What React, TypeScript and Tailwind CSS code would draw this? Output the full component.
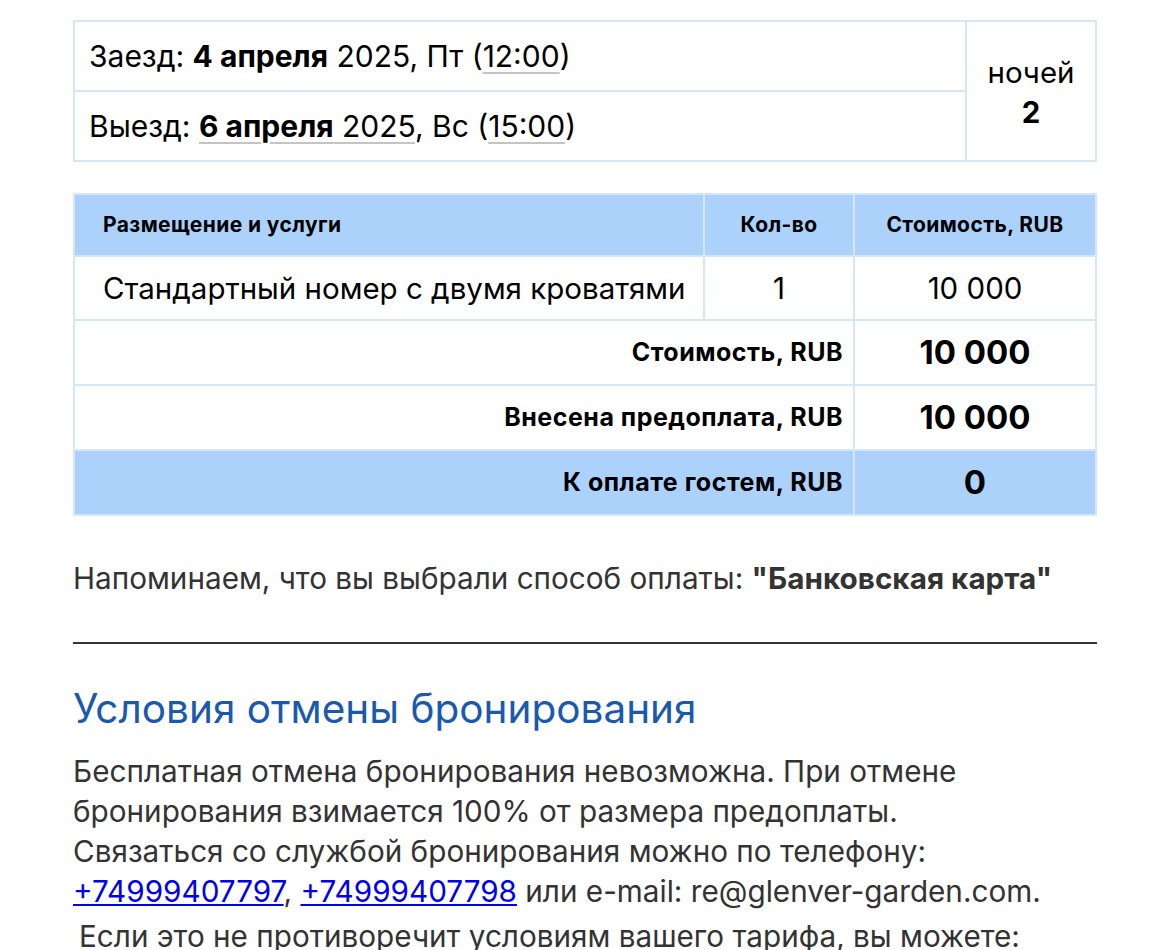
import React from "react";

const B = "border-2 border-[#d3e6fc]";
const U = "underline decoration-[#c4c4c4] decoration-[1.5px] underline-offset-[5px]";

export default function App() {
  return (
    <div className="min-h-[950px] bg-white text-black" style={{ fontFamily: "Inter, 'Noto Sans', sans-serif" }}>
      <div className="mx-auto w-[1024px] pt-[20px]">
        <table className="w-full border-collapse">
          <tbody>
            <tr className="h-[70px]">
              <td className={`${B} pl-[14px] text-[30px]`}>
                Заезд: <b className="font-bold">4 апреля</b> 2025, Пт (<span className={U}>12:00</span>)
              </td>
              <td rowSpan={2} className={`${B} w-[130px] pt-[2px] text-center text-[29.5px] leading-[40px]`}>
                <div>ночей</div>
                <div className="font-bold">2</div>
              </td>
            </tr>
            <tr className="h-[70px]">
              <td className={`${B} pl-[14px] text-[30px]`}>
                Выезд:{" "}
                <span className={U}>
                  <b className="font-bold">6 апреля</b> 2025
                </span>
                , Вс (<span className={U}>15:00</span>)
              </td>
            </tr>
          </tbody>
        </table>

        <table className="mt-[31px] w-full border-collapse">
          <tbody>
            <tr className="h-[62px] bg-[#acd1fb] text-[21px] font-bold tracking-[0.4px]">
              <td className={`${B} w-[630px] pl-[28px]`}>Размещение и услуги</td>
              <td className={`${B} w-[150px] text-center`}>Кол-во</td>
              <td className={`${B} text-center`}>Стоимость, RUB</td>
            </tr>
            <tr className="h-[64px] text-[29.5px]">
              <td className={`${B} pl-[28px]`}>Стандартный номер с двумя кроватями</td>
              <td className={`${B} text-center`}>1</td>
              <td className={`${B} text-center`}>10 000</td>
            </tr>
            <tr className="h-[65px]">
              <td colSpan={2} className={`${B} pr-[10px] text-right text-[25px] font-bold tracking-[0.5px]`}>Стоимость, RUB</td>
              <td className={`${B} text-center text-[33px] font-bold`}>10 000</td>
            </tr>
            <tr className="h-[65px]">
              <td colSpan={2} className={`${B} pr-[10px] text-right text-[25px] font-bold tracking-[0.5px]`}>Внесена предоплата, RUB</td>
              <td className={`${B} text-center text-[33px] font-bold`}>10 000</td>
            </tr>
            <tr className="h-[65px] bg-[#acd1fb]">
              <td colSpan={2} className={`${B} pr-[10px] text-right text-[25px] font-bold tracking-[0.5px]`}>К оплате гостем, RUB</td>
              <td className={`${B} text-center text-[33px] font-bold`}>0</td>
            </tr>
          </tbody>
        </table>

        <p className="mt-[42px] text-[29.7px] leading-[40px] text-[#333]">
          Напоминаем, что вы выбрали способ оплаты: <b className="font-bold">"Банковская карта"</b>
        </p>

        <div className="mt-[44px] h-[2px] bg-[#333]" />

        <h2 className="mt-[41px] text-[40.5px] leading-[48px] text-[#1a59ae]">Условия отмены бронирования</h2>

        <p className="mt-[18px] text-[29.7px] leading-[40px] text-[#333]">
          Бесплатная отмена бронирования невозможна. При отмене
          <br />
          бронирования взимается 100% от размера предоплаты.
          <br />
          Связаться со службой бронирования можно по телефону:
          <br />
          <a href="#" className="text-[#0000ee] underline">+74999407797</a>,{" "}
          <a href="#" className="text-[#0000ee] underline">+74999407798</a> или e-mail: re@glenver-garden.com.
        </p>
        <p className="mt-[5px] pl-[6px] text-[29.7px] leading-[40px] text-[#333]">
          Если это не противоречит условиям вашего тарифа, вы можете:
        </p>
      </div>
    </div>
  );
}
